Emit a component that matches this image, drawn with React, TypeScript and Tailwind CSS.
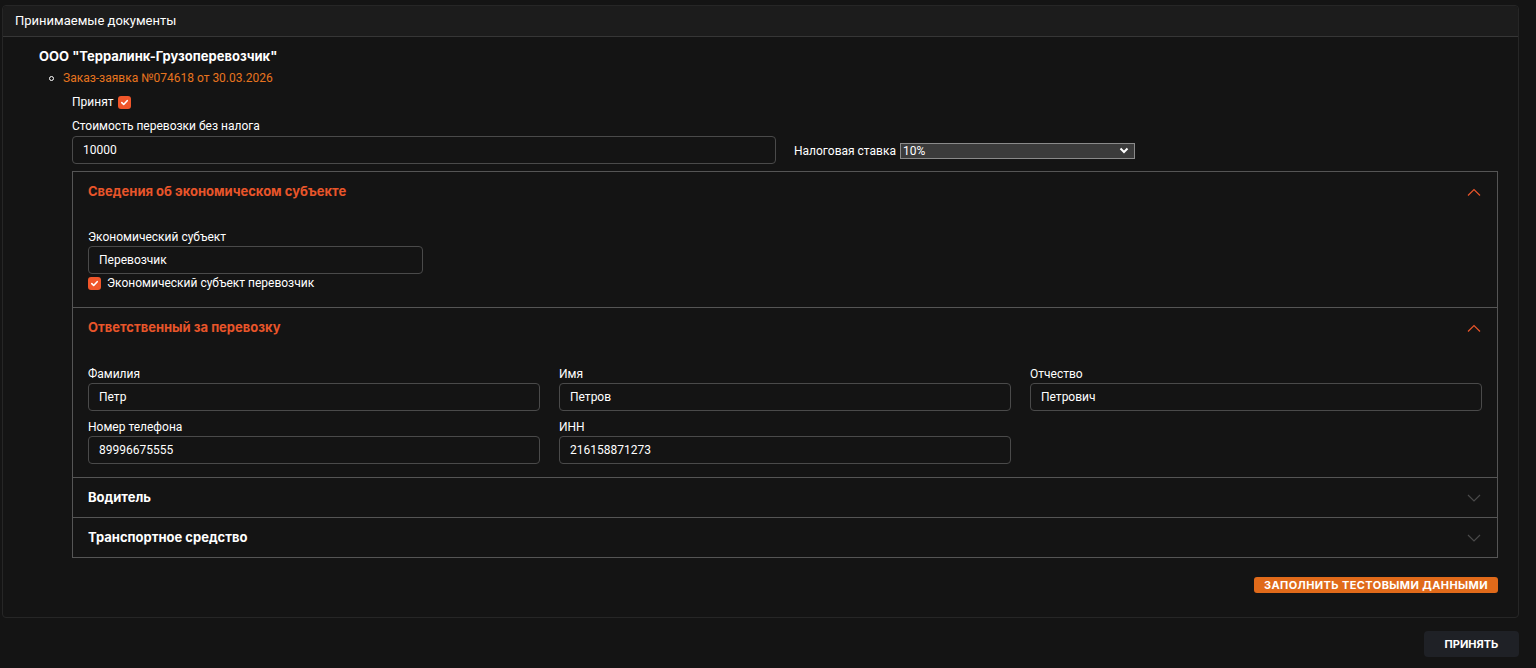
import React from "react";

const heading = "font-['Inter','Noto_Sans',sans-serif] font-bold";

function Check() {
    return (
        <span className="inline-flex w-[13px] h-[13px] rounded-[3px] bg-[#f0562a] items-center justify-center">
            <svg width="9" height="9" viewBox="0 0 10 10" fill="none">
                <path d="M2 5.2 4.1 7.2 8 3" stroke="white" strokeWidth="1.8" strokeLinecap="round" strokeLinejoin="round" />
            </svg>
        </span>
    );
}

function Chevron({ up }: { up?: boolean }) {
    return (
        <svg width="14" height="8" viewBox="0 0 14 8" fill="none">
            <path
                d={up ? "M1 7.5 7 1.5 13 7.5" : "M1 1 7 7 13 1"}
                stroke={up ? "#e8552a" : "#4a4a4a"}
                strokeWidth="1.2"
            />
        </svg>
    );
}

function Field({ label, value }: { label: string; value: string }) {
    return (
        <div>
            <div className="h-[16px] leading-[16px] text-[12px] text-white">{label}</div>
            <div className="mt-[1px] h-[28px] border border-[#4a4a4a] rounded-[4px] flex items-center px-[10px] text-[12px] text-white">
                {value}
            </div>
        </div>
    );
}

function Section({ title, open, children }: { title: string; open?: boolean; children?: React.ReactNode }) {
    return (
        <div className="border-t border-[#555] first:border-t-0">
            <div className="h-[39px] flex items-center justify-between pl-[15px] pr-[16px]">
                <span className={`${heading} text-[13px] ${open ? "text-[#e8552a]" : "text-white"}`}>{title}</span>
                <Chevron up={open} />
            </div>
            {open && children}
        </div>
    );
}

export default function App() {
    return (
        <div className="min-h-screen bg-[#141414] pt-[5px] pl-[2px] pr-[17px] font-['Roboto',sans-serif] text-white">
            <div className="border border-[#262626] rounded-[4px]">
                <div className="h-[31px] bg-[#1c1c1c] border-b border-[#363636] rounded-t-[4px] flex items-center px-[12px] text-[13px]">
                    Принимаемые документы
                </div>

                <div className="pl-[36px] pr-[20px] pt-[10px] pb-[24px]">
                    <div className={`${heading} h-[18px] leading-[18px] text-[13px]`}>ООО "Терралинк-Грузоперевозчик"</div>
                    <div className="mt-[4px] h-[18px] flex items-center pl-[10px]">
                        <span className="w-[5px] h-[5px] rounded-full border border-white" />
                        <span className="ml-[9px] text-[12px] text-[#e8741f]">Заказ-заявка №074618 от 30.03.2026</span>
                    </div>

                    <div className="pl-[33px]">
                        <div className="mt-[5px] h-[20px] flex items-center gap-[4px] text-[12px]">
                            Принят <Check />
                        </div>
                        <div className="mt-[6px] h-[16px] leading-[16px] text-[12px]">Стоимость перевозки без налога</div>
                        <div className="mt-[2px] flex items-center">
                            <div className="w-[704px] h-[28px] border border-[#4a4a4a] rounded-[4px] flex items-center px-[10px] text-[12px]">
                                10000
                            </div>
                            <span className="ml-[18px] text-[12px] mt-[2px]">Налоговая ставка</span>
                            <div className="ml-[4px] mt-[1px] w-[235px] h-[16px] bg-[#3b3b3b] border border-[#8a8a8a] flex items-center justify-between px-[2px] text-[12px]">
                                <span>10%</span>
                                <svg width="10" height="7" viewBox="0 0 10 7" fill="none" className="mr-[3px]">
                                    <path d="M1.5 1.5 5 5 8.5 1.5" stroke="white" strokeWidth="2" />
                                </svg>
                            </div>
                        </div>

                        <div className="mt-[7px] border border-[#555]">
                            <Section title="Сведения об экономическом субъекте" open>
                                <div className="pt-[18px] pb-[16px] px-[15px]">
                                    <div className="w-[335px]">
                                        <Field label="Экономический субъект" value="Перевозчик" />
                                    </div>
                                    <div className="mt-[1px] h-[16px] flex items-center gap-[6px] text-[12px]">
                                        <Check /> Экономический субъект перевозчик
                                    </div>
                                </div>
                            </Section>
                            <Section title="Ответственный за перевозку" open>
                                <div className="pt-[19px] pb-[13px] px-[15px] grid grid-cols-3 gap-x-[19px] gap-y-[8px]">
                                    <Field label="Фамилия" value="Петр" />
                                    <Field label="Имя" value="Петров" />
                                    <Field label="Отчество" value="Петрович" />
                                    <Field label="Номер телефона" value="89996675555" />
                                    <Field label="ИНН" value="216158871273" />
                                </div>
                            </Section>
                            <Section title="Водитель" />
                            <Section title="Транспортное средство" />
                        </div>

                        <div className="mt-[19px] flex justify-end">
                            <button className={`${heading} h-[16px] px-[10px] rounded-[3px] bg-[#e06a1a] text-[11px] leading-[16px] tracking-[0.4px] text-white`}>
                                ЗАПОЛНИТЬ ТЕСТОВЫМИ ДАННЫМИ
                            </button>
                        </div>
                    </div>
                </div>
            </div>

            <div className="mt-[13px] flex justify-end">
                <button className={`${heading} w-[95px] h-[26px] rounded-[4px] bg-[#1f2126] text-[11px] text-white`}>
                    ПРИНЯТЬ
                </button>
            </div>
        </div>
    );
}
